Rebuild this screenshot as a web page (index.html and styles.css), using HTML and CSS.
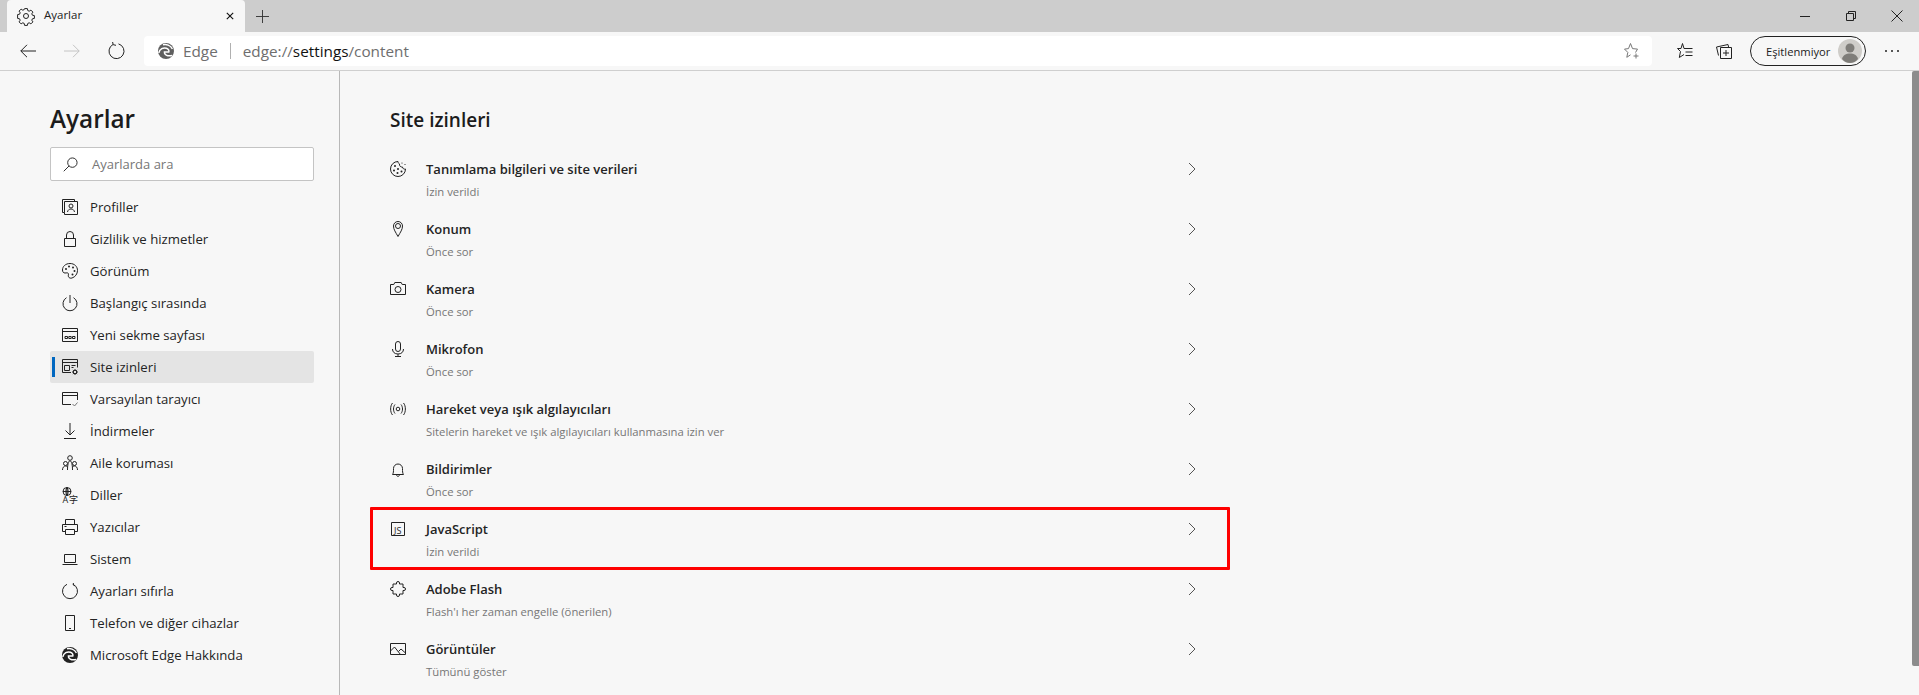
FILE: index.html
```html
<!DOCTYPE html>
<html lang="tr">
<head>
<meta charset="utf-8">
<title>Ayarlar</title>
<link rel="stylesheet" href="styles.css">
</head>
<body>
<div class="window">
  <header class="tabstrip">
    <div class="tab">
      <svg class="ic tab-gear" viewBox="0 0 16 16"><circle cx="8" cy="8" r="2.5"/><path d="M6.6.6h2.8l.4 2 1.4.6 1.7-1.1 2 2-1.1 1.7.6 1.4 2 .4v2.8l-2 .4-.6 1.4 1.1 1.7-2 2-1.7-1.1-1.4.6-.4 2H6.6l-.4-2-1.4-.6-1.7 1.1-2-2 1.1-1.7-.6-1.4-2-.4V6.6l2-.4.6-1.4-1.1-1.7 2-2 1.7 1.1 1.4-.6z"/></svg>
      <span class="tab-title">Ayarlar</span>
      <svg class="ic tab-close" viewBox="0 0 10 10"><path d="M1 1l8 8M9 1L1 9"/></svg>
    </div>
    <svg class="ic new-tab" viewBox="0 0 14 14"><path d="M7 0v14M0 7h14"/></svg>
    <div class="win-controls">
      <svg class="ic win-btn" viewBox="0 0 12 12"><path d="M1 6.5h10"/></svg>
      <svg class="ic win-btn" viewBox="0 0 12 12"><path d="M1.5 3.5h7v7h-7zM3.5 3.5v-2h7v7h-2"/></svg>
      <svg class="ic win-btn" viewBox="0 0 12 12"><path d="M.5.5l11 11M11.5.5l-11 11"/></svg>
    </div>
  </header>

  <nav class="toolbar">
    <svg class="ic nav-btn nav-back" viewBox="0 0 16 16"><path d="M16 8H.8M7 1.8L.8 8 7 14.2"/></svg>
    <svg class="ic nav-btn nav-fwd" viewBox="0 0 16 16"><path d="M0 8h15.2M9 1.8L15.2 8 9 14.2"/></svg>
    <svg class="ic nav-btn nav-reload" viewBox="0 0 16 16"><path d="M5 1.500A7.500 7.500 0 1 0 10.500 .9M4.600 -1L5.200 1.700 8 2.300"/></svg>
    <div class="addressbar">
      <svg class="edge-logo edge-grey" viewBox="0 0 16 16"><circle cx="8" cy="8" r="8"/><path class="swirl" d="M.8 9.8C1.6 6 5.4 4.2 8.4 5.2c2 .7 3 2.4 2.4 3.8H6.4c-.4 2.4 2.6 4.6 7.6 3.6"/><path class="swirl" d="M5 1.8c3-1 7.6.4 9.4 4"/></svg>
      <span class="addr-origin">Edge</span>
      <span class="addr-sep"></span>
      <span class="addr-url">edge://<b>settings</b>/content</span>
      <svg class="ic-grey star-add" viewBox="0 0 16 16"><path d="M11.500 9.500l2-3.400-5-.5L6.500.5l-2 5.100-4 .5 3.300 3.300-1 4.900 3.700-2.500"/><path d="M12 10.500v5M9.500 13h5"/></svg>
    </div>
    <svg class="ic tool-fav" viewBox="0 0 16 16"><path d="M5.500.5L7 5.500h8.500M5.500.5L4 5.500H.5l3 3-1.200 6L7 11.500M8.500 9h7M8.500 12.500h7"/></svg>
    <svg class="ic tool-coll" viewBox="0 0 16 16"><path d="M4.500 4.500h11v11h-11zM10 7v6M7 10h6M2.500 12.500L.5 4 12 1.500l.7 3"/></svg>
    <div class="sync-pill">
      <span class="sync-text">Eşitlenmiyor</span>
      <svg class="avatar" viewBox="0 0 24 24"><circle class="av-bg" cx="12" cy="12" r="12"/><circle class="av-fg" cx="12" cy="9" r="4.500"/><path class="av-fg" d="M4 20c1-4 4-5.500 8-5.500s7 1.500 8 5.500c-2 2.500-5 4-8 4s-6-1.500-8-4z"/></svg>
    </div>
    <div class="more-dots"><i></i><i></i><i></i></div>
  </nav>

  <div class="content">
    <aside class="sidebar">
      <h1 class="side-title">Ayarlar</h1>
      <div class="search">
        <svg class="ic search-ic" viewBox="0 0 16 16"><circle cx="10" cy="6" r="5"/><path d="M6.500 9.500L.8 15.200"/></svg>
        <span class="search-ph">Ayarlarda ara</span>
      </div>
      <ul class="menu">
        <li class="menu-item"><svg class="ic menu-ic" viewBox="0 0 16 16"><path d="M2.500 13.500H.5V.5h12v2M2.500 13.500v-11h13v13h-13z"/><circle cx="9" cy="7" r="2"/><path d="M5.500 13c.3-2 1.700-3 3.500-3s3.200 1 3.500 3"/></svg><span>Profiller</span></li>
        <li class="menu-item"><svg class="ic menu-ic" viewBox="0 0 16 16"><path d="M2.500 7.500h11v8h-11zM4.500 7.500V4a3.500 3.500 0 0 1 7 0v3.500"/></svg><span>Gizlilik ve hizmetler</span></li>
        <li class="menu-item"><svg class="ic menu-ic" viewBox="0 0 16 16"><path d="M8 .5C3.500.5.500 3.500.5 7c0 2 1 3 2.500 3 1.500 0 2.500-.5 3.200.3.800 1-.4 2.200.3 3.500.6 1.200 2 1.700 3.500 1.200 3.200-1 5.500-4 5.500-7.500C15.500 3.500 12.500.5 8 .5z"/><circle class="dot" cx="4" cy="6" r="1"/><circle class="dot" cx="7" cy="3.500" r="1"/><circle class="dot" cx="11" cy="4.500" r="1"/><circle class="dot" cx="12.500" cy="8" r="1"/><circle class="dot" cx="10.500" cy="11.500" r="1"/></svg><span>Görünüm</span></li>
        <li class="menu-item"><svg class="ic menu-ic" viewBox="0 0 16 16"><path d="M8 0v8M4.500 2.700a7 7 0 1 0 7 0"/></svg><span>Başlangıç sırasında</span></li>
        <li class="menu-item"><svg class="ic menu-ic" viewBox="0 0 16 16"><path d="M.5 1.500h15v13H.5zM.5 4.500h15M3 9.500h2.500v2H3zM6.800 9.500h2.400v2H6.800zM10.500 9.500H13v2h-2.500z"/></svg><span>Yeni sekme sayfası</span></li>
        <li class="menu-item menu-active"><svg class="ic menu-ic" viewBox="0 0 16 16"><path d="M9 13.500H.5V.5h15v8M.5 3.500h15M2.500 6.500h5v5h-5zM9.500 6.500h4M9.500 8.500h2"/><circle cx="13" cy="13" r="1.700"/><path d="M13 10v1.300M13 14.700V16M10 13h1.300M14.700 13H16M10.900 10.900l.9.900M14.200 14.200l.9.900M10.900 15.100l.9-.9M14.200 11.800l.9-.9"/></svg><span>Site izinleri</span></li>
        <li class="menu-item"><svg class="ic menu-ic" viewBox="0 0 16 16"><path d="M15.500 9V1.500H.5v12H9M.5 4.500h15"/><path class="grey-stroke" d="M10.500 13l2 2 3-3.500"/></svg><span>Varsayılan tarayıcı</span></li>
        <li class="menu-item"><svg class="ic menu-ic" viewBox="0 0 16 16"><path d="M8 0v12M3.500 7.500L8 12l4.500-4.500M2 15.500h12"/></svg><span>İndirmeler</span></li>
        <li class="menu-item"><svg class="ic menu-ic" viewBox="0 0 16 16"><circle cx="8" cy="3" r="2.300"/><circle cx="3.500" cy="8.500" r="2"/><circle cx="12.500" cy="8.500" r="2"/><path d="M.5 15c0-2.500 1.300-4 3-4 1 0 1.700.4 2.300 1M15.500 15c0-2.500-1.300-4-3-4-1 0-1.700.4-2.300 1M5.500 15c0-5.500 1-8.500 2.500-9.500 1.500 1 2.500 4 2.500 9.500"/></svg><span>Aile koruması</span></li>
        <li class="menu-item"><svg class="ic menu-ic" viewBox="0 0 16 16"><circle cx="5" cy="4.500" r="4"/><path d="M1 4.500h8M5 .5v8M5 .5C3.500 2 3.500 7 5 8.500M5 .5C6.500 2 6.500 7 5 8.500"/><text class="lang-a" x=".5" y="16">A</text><text class="lang-z" x="7" y="15.500">字</text></svg><span>Diller</span></li>
        <li class="menu-item"><svg class="ic menu-ic" viewBox="0 0 16 16"><path d="M3.500 5.500v-5h9v5M3.500 12.500H.5v-7h15v7h-3M3.500 10.500h9v5h-9zM2.500 7.500h2"/></svg><span>Yazıcılar</span></li>
        <li class="menu-item"><svg class="ic menu-ic" viewBox="0 0 16 16"><path d="M2.500 3.500h11v8h-11zM.5 13.500h15"/></svg><span>Sistem</span></li>
        <li class="menu-item"><svg class="ic menu-ic" viewBox="0 0 16 16"><path d="M5 1.300a7.500 7.500 0 1 0 6 0M11.500 0L11 1.500 13 3"/></svg><span>Ayarları sıfırla</span></li>
        <li class="menu-item"><svg class="ic menu-ic" viewBox="0 0 16 16"><path d="M3.500.5h9v15h-9zM7 13.500h2"/></svg><span>Telefon ve diğer cihazlar</span></li>
        <li class="menu-item"><svg class="edge-logo edge-dark menu-ic" viewBox="0 0 16 16"><circle cx="8" cy="8" r="8"/><path class="swirl" d="M.8 9.800C1.600 6 5.400 4.200 8.400 5.200c2 .7 3 2.400 2.400 3.800H6.400c-.4 2.400 2.600 4.600 7.600 3.600"/><path class="swirl" d="M5 1.800c3-1 7.600.4 9.400 4"/></svg><span>Microsoft Edge Hakkında</span></li>
      </ul>
    </aside>

    <main class="main">
      <h2 class="main-title">Site izinleri</h2>
      <div class="perm">
        <svg class="ic perm-ic" viewBox="0 0 16 16"><path d="M8 .5a7.500 7.500 0 1 0 7.500 7.500c-1.500.5-3-.5-3-2-1.700.3-3.300-1-3-3C8.500 2.500 8 1.500 8 .5z"/><circle class="dot" cx="5" cy="5" r="1"/><circle class="dot" cx="4" cy="9.500" r="1"/><circle class="dot" cx="8" cy="8" r="1"/><circle class="dot" cx="7.500" cy="12" r="1"/><circle class="dot" cx="11.500" cy="10.500" r="1"/><circle class="dot" cx="12" cy="2" r=".6"/><circle class="dot" cx="15" cy="3.500" r=".6"/></svg>
        <div class="perm-text"><div class="perm-name">Tanımlama bilgileri ve site verileri</div><div class="perm-sub">İzin verildi</div></div>
        <svg class="chev" viewBox="0 0 8 14"><path d="M1 1l6 6-6 6"/></svg>
      </div>
      <div class="perm">
        <svg class="ic perm-ic" viewBox="0 0 16 16"><path d="M8 15.500C5.500 11 3.500 8.500 3.500 5a4.500 4.500 0 0 1 9 0c0 3.500-2 6-4.500 10.500z"/><circle cx="8" cy="5" r="2.500"/></svg>
        <div class="perm-text"><div class="perm-name">Konum</div><div class="perm-sub">Önce sor</div></div>
        <svg class="chev" viewBox="0 0 8 14"><path d="M1 1l6 6-6 6"/></svg>
      </div>
      <div class="perm">
        <svg class="ic perm-ic" viewBox="0 0 16 16"><path d="M.5 3.500h3.300l1-2h6.400l1 2h3.300v10H.5z"/><circle cx="8" cy="8.500" r="3"/></svg>
        <div class="perm-text"><div class="perm-name">Kamera</div><div class="perm-sub">Önce sor</div></div>
        <svg class="chev" viewBox="0 0 8 14"><path d="M1 1l6 6-6 6"/></svg>
      </div>
      <div class="perm">
        <svg class="ic perm-ic" viewBox="0 0 16 16"><rect x="5.500" y=".5" width="5" height="10" rx="2.500"/><path d="M2.500 8c0 3 2 5 5.500 5s5.500-2 5.500-5M8 13v2.500M5 15.500h6"/></svg>
        <div class="perm-text"><div class="perm-name">Mikrofon</div><div class="perm-sub">Önce sor</div></div>
        <svg class="chev" viewBox="0 0 8 14"><path d="M1 1l6 6-6 6"/></svg>
      </div>
      <div class="perm">
        <svg class="ic perm-ic" viewBox="0 0 16 16"><circle cx="8" cy="8" r="1.800"/><path d="M5 3.500c-2 2.500-2 6.500 0 9M11 3.500c2 2.500 2 6.500 0 9M2.500 2C0 5 0 11 2.500 14M13.500 2c2.500 3 2.500 9 0 12"/></svg>
        <div class="perm-text"><div class="perm-name">Hareket veya ışık algılayıcıları</div><div class="perm-sub">Sitelerin hareket ve ışık algılayıcıları kullanmasına izin ver</div></div>
        <svg class="chev" viewBox="0 0 8 14"><path d="M1 1l6 6-6 6"/></svg>
      </div>
      <div class="perm">
        <svg class="ic perm-ic" viewBox="0 0 16 16"><path d="M2.500 13.500c1-1.500 1-3 1-6a4.500 4.500 0 0 1 9 0c0 3 0 4.500 1 6zM6.500 13.500c0 2.500 3 2.500 3 0"/></svg>
        <div class="perm-text"><div class="perm-name">Bildirimler</div><div class="perm-sub">Önce sor</div></div>
        <svg class="chev" viewBox="0 0 8 14"><path d="M1 1l6 6-6 6"/></svg>
      </div>
      <div class="perm perm-flagged">
        <svg class="ic perm-ic" viewBox="0 0 16 16"><path d="M1.500 1.500h13v13h-13z"/><text class="js-mark" x="4" y="13">JS</text></svg>
        <div class="perm-text"><div class="perm-name">JavaScript</div><div class="perm-sub">İzin verildi</div></div>
        <svg class="chev" viewBox="0 0 8 14"><path d="M1 1l6 6-6 6"/></svg>
      </div>
      <div class="perm">
        <svg class="ic perm-ic" viewBox="0 0 16 16"><path d="M6.500 3V2a1.500 1.500 0 0 1 3 0v1H13v3.500h1a1.500 1.500 0 0 1 0 3h-1V13H9.500v1a1.500 1.500 0 0 1-3 0v-1H3V9.500H2a1.500 1.500 0 0 1 0-3h1V3z"/></svg>
        <div class="perm-text"><div class="perm-name">Adobe Flash</div><div class="perm-sub">Flash'ı her zaman engelle (önerilen)</div></div>
        <svg class="chev" viewBox="0 0 8 14"><path d="M1 1l6 6-6 6"/></svg>
      </div>
      <div class="perm">
        <svg class="ic perm-ic" viewBox="0 0 16 16"><path d="M.5 2.500h15v11H.5zM.5 10l4-4 6 7.500M8.500 10.500L11 8l4.500 4"/></svg>
        <div class="perm-text"><div class="perm-name">Görüntüler</div><div class="perm-sub">Tümünü göster</div></div>
        <svg class="chev" viewBox="0 0 8 14"><path d="M1 1l6 6-6 6"/></svg>
      </div>
    </main>
    <div class="scrollbar"></div>
  </div>
</div>
</body>
</html>
```

FILE: styles.css
```css
* { box-sizing: border-box; }
html, body { margin: 0; height: 100%; overflow: hidden; }
body { font-family: "Open Sans", "Noto Sans", sans-serif; color: #1f1f1f; background: #f7f7f7; }
ul { list-style: none; margin: 0; padding: 0; }
h1, h2 { margin: 0; }
svg { display: block; flex: none; overflow: visible; }

.ic { fill: none; stroke: #222; stroke-width: 1; }
.ic-grey { fill: none; stroke: #777; stroke-width: 1; }
.dot { fill: #222; stroke: none; }
.grey-stroke { stroke: #777; }

.window { display: flex; flex-direction: column; height: 695px; }

.tabstrip { flex: none; height: 32px; background: #cdcdcd; display: flex; align-items: center; padding-left: 7px; }
.tab { width: 238px; height: 32px; background: #f7f7f7; border-radius: 4px 4px 0 0; display: flex; align-items: center; padding-left: 11px; padding-right: 11px; }
.tab-gear { width: 16px; height: 16px; }
.tab-title { font-size: 11.5px; line-height: 14px; margin-left: 10px; margin-top: -2px; color: #222; }
.tab-close { width: 8px; height: 8px; margin-left: auto; stroke: #111; stroke-width: 1.4; }
.new-tab { width: 13px; height: 13px; margin-left: 11px; stroke: #333; }
.win-controls { margin-left: auto; display: flex; align-items: center; gap: 34px; padding-right: 16px; }
.win-btn { width: 12px; height: 12px; }

.toolbar { flex: none; height: 39px; background: #f7f7f7; border-bottom: 1px solid #cfcfcf; display: flex; align-items: center; padding: 0 20px; }
.nav-btn { width: 16px; height: 16px; }
.nav-fwd { margin-left: 28px; stroke: #c4c4c4; }
.nav-reload { margin-left: 28px; }
.addressbar { width: 1508px; height: 30px; margin-left: 20px; background: #fff; border-radius: 4px; display: flex; align-items: center; padding: 0 12px 0 14px; font-size: 15.3px; color: #6e6e6e; }
.edge-logo { width: 16px; height: 16px; }
.edge-grey circle { fill: #5f5f5f; }
.edge-dark circle { fill: #222; }
.swirl { fill: none; stroke: #fff; stroke-width: 1.5; }
.addr-origin { margin-left: 9px; }
.addr-sep { width: 1px; height: 16px; background: #b0b0b0; margin: 0 12px 0 12px; }
.addr-url b { font-weight: 400; color: #111; }
.star-add { width: 16px; height: 16px; margin-left: auto; }
.tool-fav { width: 16px; height: 16px; margin-left: 25px; }
.tool-coll { width: 16px; height: 16px; margin-left: 23px; }
.sync-pill { width: 116px; height: 30px; margin-left: 18px; border: 1px solid #222; border-radius: 15px; display: flex; align-items: center; padding-left: 15px; }
.sync-text { font-size: 11.2px; color: #222; }
.avatar { width: 24px; height: 24px; margin-left: auto; margin-right: 3px; }
.av-bg { fill: #cfcdc9; }
.av-fg { fill: #7f7d79; }
.more-dots { display: flex; gap: 4px; margin-left: 19px; }
.more-dots i { width: 2px; height: 2px; background: #222; border-radius: 50%; }

.content { flex: 1; display: flex; position: relative; min-height: 0; }
.sidebar { flex: none; width: 340px; border-right: 1px solid #b8b8b8; padding: 31px 0 0 50px; }
.side-title { font-size: 24.3px; line-height: 34px; font-weight: 600; color: #1c1c1c; }
.search { width: 264px; height: 34px; margin-top: 11px; background: #fff; border: 1px solid #c4c4c4; border-radius: 2px; display: flex; align-items: center; padding-left: 12px; }
.search-ic { width: 15px; height: 15px; }
.search-ph { font-size: 13px; color: #767676; margin-left: 14px; }
.menu { margin-top: 10px; }
.menu-item { width: 264px; height: 32px; display: flex; align-items: center; padding-left: 12px; font-size: 13.2px; color: #242424; border-radius: 2px; position: relative; }
.menu-ic { width: 16px; height: 16px; }
.menu-item span { margin-left: 12px; }
.menu-active { background: #e4e4e4; }
.menu-active::before { content: ""; position: absolute; left: 2px; top: 6px; width: 3px; height: 20px; background: #0067c0; }
.lang-a { font-size: 9px; fill: #222; stroke: none; }
.lang-z { font-size: 9px; fill: #222; stroke: none; font-family: "Noto Sans CJK SC", sans-serif; }
.js-mark { font-size: 9px; fill: #222; stroke: none; font-family: "Open Sans", sans-serif; }

.main { flex: 1; padding: 35px 0 0 50px; min-width: 0; }
.main-title { font-size: 19px; line-height: 28px; font-weight: 600; color: #1c1c1c; margin-bottom: 16px; }
.perm { width: 806px; height: 60px; display: flex; align-items: flex-start; padding-top: 11px; position: relative; }
.perm-ic { width: 16px; height: 16px; }
.perm-text { margin-left: 20px; margin-top: -2px; }
.perm-name { font-size: 13px; line-height: 20px; font-weight: 600; color: #242424; }
.perm-sub { font-size: 11.3px; line-height: 20px; margin-top: 3px; color: #767676; }
.chev { width: 8px; height: 14px; margin-left: auto; margin-top: 1px; fill: none; stroke: #555; stroke-width: 1; }
.perm-flagged::after { content: ""; position: absolute; left: -20px; right: -34px; top: -3px; bottom: 0; border: 3px solid #fe0000; border-radius: 1px; }

.scrollbar { position: absolute; top: 0; right: 0; bottom: 29px; width: 7px; background: #8c8c8c; border-radius: 2px 0 0 2px; }
```
